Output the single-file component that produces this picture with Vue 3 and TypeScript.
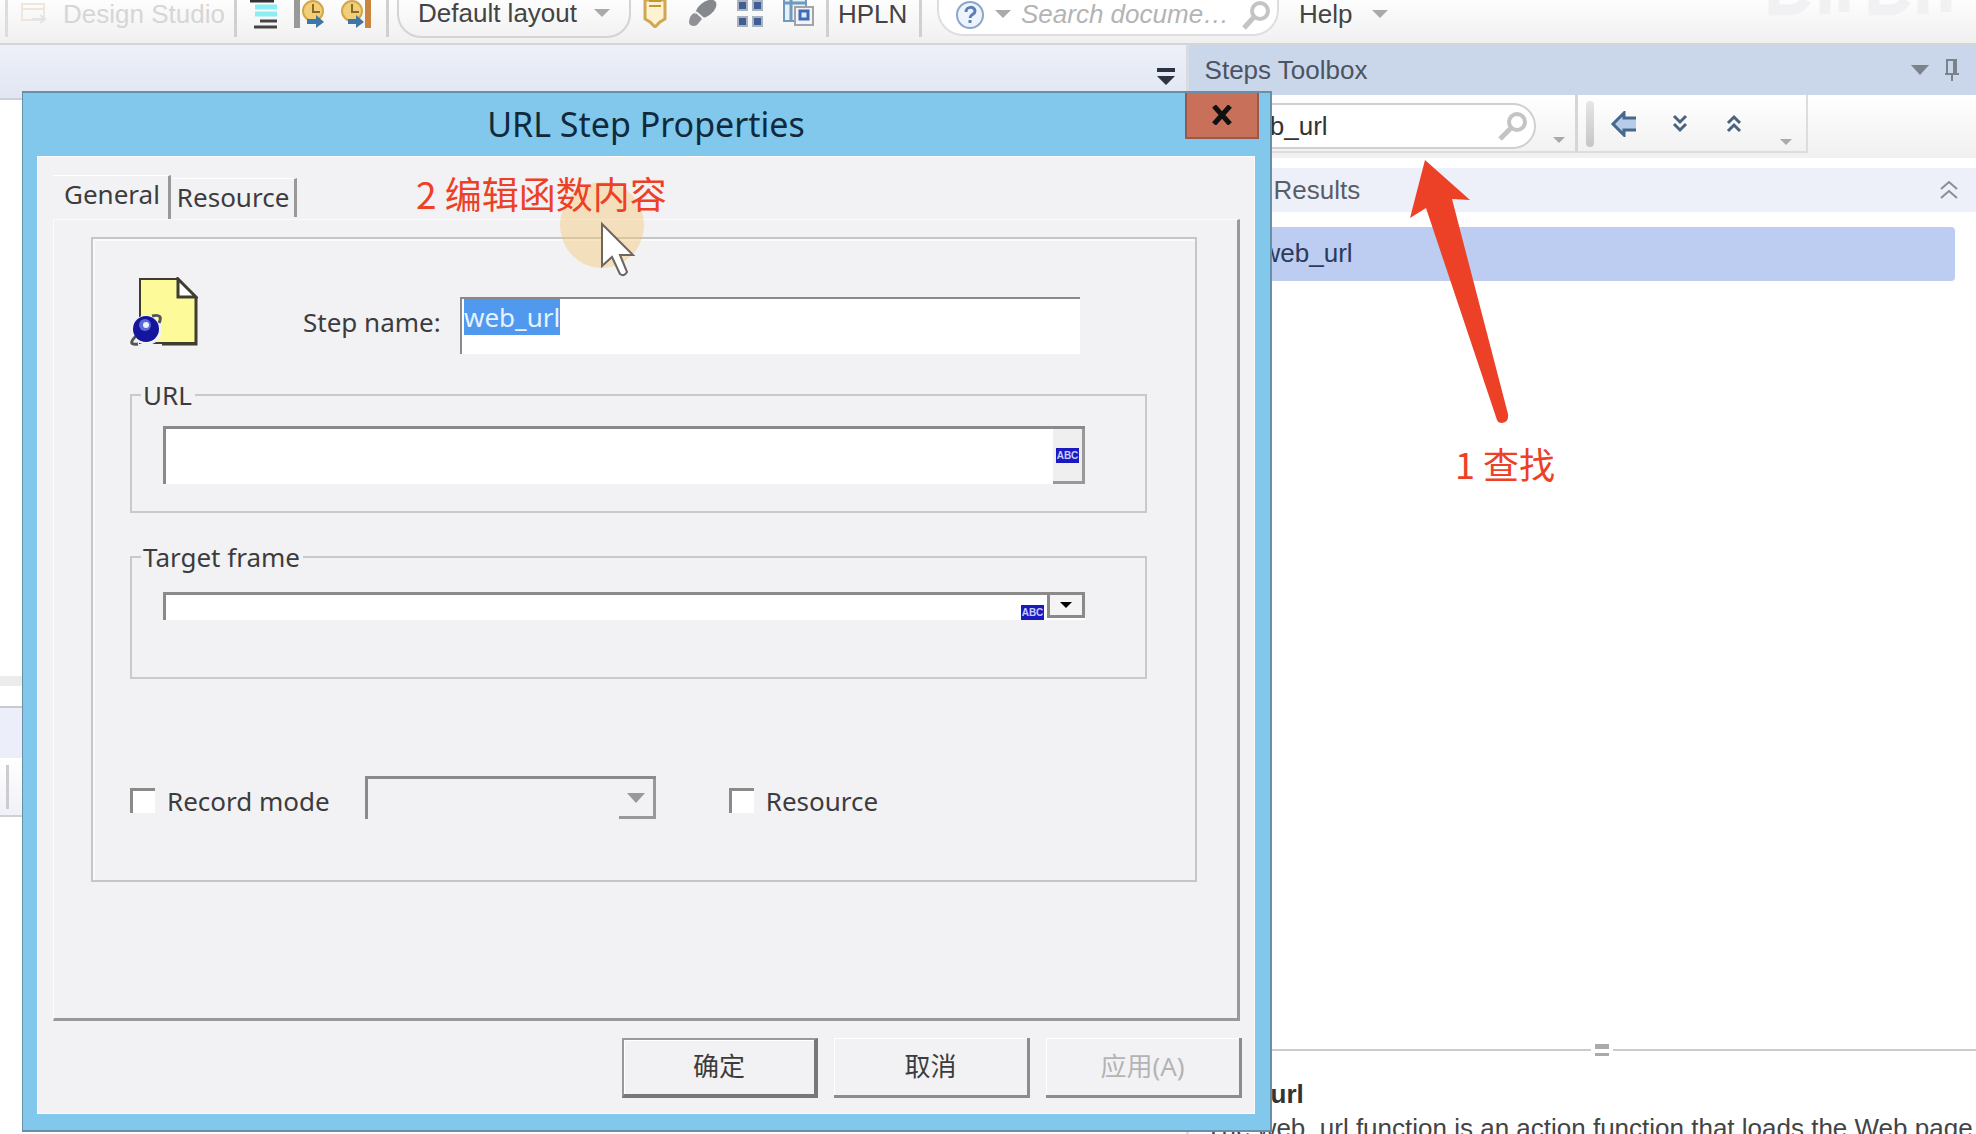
<script setup lang="ts">
import { onMounted, ref } from 'vue'

const stepName = ref('web_url')
const url = ref('')
const targetFrame = ref('')
const recordMode = ref(false)
const isResource = ref(false)
const search = ref('web_url')
const activeTab = ref('General')
const stepInput = ref<HTMLInputElement | null>(null)

onMounted(() => {
  stepInput.value?.focus()
  stepInput.value?.select()
})
</script>

<template>
  <div class="app">
    <header class="toolbar">
      <button class="tool design" disabled>
        <svg width="28" height="28" viewBox="0 0 28 28" fill="none" stroke-width="2">
          <rect x="2" y="4" width="22" height="16" stroke="#efe6dd" />
          <path d="M2 9h22" stroke="#efe6dd" />
          <path d="M12 19h12M20 15l5 4-5 4" stroke="#e0e4e6" />
        </svg>
        <span>Design Studio</span>
      </button>
      <i class="sep"></i>
      <div class="icons first">
        <button class="icon" aria-label="Outline">
          <svg width="28" height="30" viewBox="0 0 28 30">
            <path d="M0 1h24" stroke="#333" stroke-width="3" />
            <path d="M5 7h22M5 14h22" stroke="#8ceef5" stroke-width="5" />
            <path d="M10 21h17M4 27h23" stroke="#444" stroke-width="3" />
          </svg>
        </button>
        <button class="icon" aria-label="Run from start">
          <svg width="32" height="30" viewBox="0 0 32 30">
            <rect x="1" y="0" width="6" height="28" fill="#999" />
            <circle cx="20" cy="11" r="10" fill="#f1cf7a" stroke="#d3a648" stroke-width="2" />
            <path d="M20 4v8h7" fill="none" stroke="#8c6a25" stroke-width="2" />
            <path d="M14 19h9v-4l8 7-8 6v-4h-9z" fill="#3f76a8" />
          </svg>
        </button>
        <button class="icon" aria-label="Run to end">
          <svg width="32" height="30" viewBox="0 0 32 30">
            <rect x="25" y="0" width="6" height="28" fill="#c98440" />
            <circle cx="12" cy="11" r="10" fill="#f1cf7a" stroke="#d3a648" stroke-width="2" />
            <path d="M12 4v8h7" fill="none" stroke="#8c6a25" stroke-width="2" />
            <path d="M8 19h8v-4l8 7-8 6v-4H8z" fill="#3f76a8" />
          </svg>
        </button>
      </div>
      <i class="sep"></i>
      <button class="layout-pill">
        <span>Default layout</span>
        <i class="tri"></i>
      </button>
      <div class="icons second">
        <button class="icon" aria-label="Bookmark">
          <svg width="26" height="28" viewBox="0 0 26 28">
            <path d="M3 0h20v19l-5 3-5 5-5-5-5-3z" fill="#fdf3d3" stroke="#d2a652" stroke-width="3" />
            <path d="M7 1h12M7 6h12" stroke="#c9952f" stroke-width="2" />
          </svg>
        </button>
        <button class="icon" aria-label="Brush">
          <svg width="32" height="28" viewBox="0 0 32 28">
            <ellipse cx="20" cy="9" rx="12" ry="7" transform="rotate(-38 20 9)" fill="#85888c" />
            <path d="M8 13l8 6-5 6c-3 2-7 1-8-2 0-3 1-8 5-10z" fill="#8f9194" />
            <path d="M10 12l8 7" stroke="#f4f4f4" stroke-width="2" />
          </svg>
        </button>
        <button class="icon" aria-label="Tiles">
          <svg width="28" height="28" viewBox="0 0 28 28" fill="#3f5f92" stroke="#a9b2c0" stroke-width="2">
            <path d="M2 1h9v9H2zM17 1h9v9h-9zM2 17h9v9H2zM17 17h9v9h-9z" />
          </svg>
        </button>
        <button class="icon" aria-label="Windows">
          <svg width="34" height="28" viewBox="0 0 34 28">
            <rect x="2" y="-2" width="22" height="23" fill="#e6f0f8" stroke="#6f99bd" stroke-width="2" />
            <path d="M2 3h22M9 0v21" stroke="#6f99bd" stroke-width="3" />
            <rect x="13" y="7" width="18" height="18" fill="#f3f3f3" stroke="#a0a4a8" stroke-width="2" />
            <rect x="18" y="11" width="8" height="8" fill="#dce9fb" stroke="#3f6bb5" stroke-width="3" />
          </svg>
        </button>
      </div>
      <i class="sep"></i>
      <button class="tool hpln">HPLN</button>
      <i class="sep"></i>
      <label class="doc-search">
        <svg width="30" height="30" viewBox="0 0 30 30">
          <circle cx="15" cy="15" r="13" fill="#eef4fc" stroke="#8aa6cc" stroke-width="2" />
          <path d="M11 12c0-6 9-6 9-1 0 4-5 3-5 7M15 20v3" fill="none" stroke="#5b7fb4" stroke-width="3" />
        </svg>
        <i class="tri"></i>
        <input type="text" placeholder="Search docume…" aria-label="Search documentation" />
        <svg width="30" height="30" viewBox="0 0 30 30" fill="none" stroke="#c4c4c4">
          <circle cx="19" cy="11" r="8" stroke-width="4" />
          <path d="M13 17L3 28" stroke-width="5" />
        </svg>
      </label>
      <button class="tool help"><span>Help</span><i class="tri"></i></button>
      <svg class="brand" width="192" height="20" viewBox="0 0 192 20" fill="none" stroke="#f1f1f3" stroke-width="11">
        <path d="M6 0v10h14q12 0 18-10M57 0v14M76 0v12M106 0v10h14q12 0 18-10M155 0v14M178 0v12" />
      </svg>
    </header>

    <main class="workspace">
      <section class="editor">
        <div class="editor-bar">
          <button class="icon" aria-label="Open documents">
            <svg width="18" height="18" viewBox="0 0 18 18" fill="#2c3444">
              <path d="M0 0h18v4H0zM0 8h18l-9 9z" />
            </svg>
          </button>
        </div>
        <div class="editor-page"></div>
        <div class="output-edge"></div>
        <div class="output-bar"></div>
        <div class="output-tools"><i></i></div>
        <div class="output-page"></div>
      </section>

      <aside class="toolbox">
        <div class="toolbox-head">
          <h2>Steps Toolbox</h2>
          <button class="icon" aria-label="Panel menu">
            <svg width="18" height="10" viewBox="0 0 18 10" fill="#7b828c"><path d="M0 0h18l-9 10z" /></svg>
          </button>
          <button class="icon" aria-label="Pin panel">
            <svg width="16" height="24" viewBox="0 0 16 24" fill="none" stroke="#7b828c" stroke-width="2">
              <path d="M3 16V2h9v14M10 2v14M1 16h14M8 16v7" />
            </svg>
          </button>
        </div>
        <div class="toolbox-tools">
          <div class="search-box">
            <label class="step-search">
              <input v-model="search" type="text" aria-label="Search steps" />
              <svg width="30" height="30" viewBox="0 0 30 30" fill="none" stroke="#c4c4c4">
                <circle cx="19" cy="11" r="8" stroke-width="4" />
                <path d="M13 17L2 28" stroke-width="5" />
              </svg>
            </label>
            <i class="tri small"></i>
          </div>
          <div class="nav-box">
            <i class="grip"></i>
            <button class="icon" aria-label="Back">
              <svg width="28" height="26" viewBox="0 0 28 26">
                <path d="M13 2L3 13l10 11v-6h13V8H13z" fill="#b7cce8" />
                <path d="M26 7H14V2L3 13l11 11v-5h12" fill="none" stroke="#46688f" stroke-width="3" />
              </svg>
            </button>
            <button class="icon" aria-label="Expand all">
              <svg width="16" height="20" viewBox="0 0 16 20" fill="none" stroke="#4a6480" stroke-width="3">
                <path d="M2 2l6 6 6-6M2 10l6 6 6-6" />
              </svg>
            </button>
            <button class="icon" aria-label="Collapse all">
              <svg width="16" height="20" viewBox="0 0 16 20" fill="none" stroke="#4a6480" stroke-width="3">
                <path d="M2 9l6-6 6 6M2 17l6-6 6 6" />
              </svg>
            </button>
            <i class="tri small"></i>
          </div>
        </div>
        <div class="results-head">
          <h3>Results</h3>
          <button class="icon" aria-label="Collapse results">
            <svg width="18" height="20" viewBox="0 0 18 20" fill="none" stroke="#888c94" stroke-width="2">
              <path d="M1 9l8-7 8 7M1 18l8-7 8 7" />
            </svg>
          </button>
        </div>
        <a class="result" href="#">web_url</a>
        <div class="toolbox-space"></div>
        <div class="splitter"><i></i></div>
        <div class="description">
          <strong>web_url</strong>
          <p>The web_url function is an action function that loads the Web page</p>
        </div>
      </aside>
    </main>

    <form class="dialog" role="dialog" aria-labelledby="dialog-title" @submit.prevent>
      <header class="titlebar">
        <h1 id="dialog-title">URL Step Properties</h1>
        <button type="button" class="close" aria-label="Close">
          <svg width="22" height="20" viewBox="0 0 22 20" stroke="#111" stroke-width="5">
            <path d="M3 1l16 18M19 1L3 19" />
          </svg>
        </button>
      </header>
      <div class="dialog-body">
        <nav class="tabs">
          <button type="button" class="tab current" @click="activeTab = 'General'">General</button>
          <button type="button" class="tab" @click="activeTab = 'Resource'">Resource</button>
        </nav>
        <div class="panel">
          <div class="frame">
            <div class="name-row">
              <svg width="68" height="70" viewBox="0 0 68 70">
                <path d="M10 2h38l18 18v46H10z" fill="#fdfa9a" stroke="#3d3d30" stroke-width="2" />
                <path d="M48 2v18h18z" fill="#fff" stroke="#3d3d30" stroke-width="3" />
                <path d="M66 20v47H32" fill="none" stroke="#3d3d30" stroke-width="3" />
                <circle cx="17" cy="53" r="15" fill="#f2f2f3" />
                <path d="M22 39c8-2 10 1 7 7M6 59c-6 6-6 9 2 8" fill="none" stroke="#555" stroke-width="3" />
                <circle cx="16" cy="52" r="13" fill="#14149c" />
                <circle cx="15" cy="48" r="6" fill="#5b6ad8" />
                <circle cx="16" cy="48" r="3" fill="#eef1ff" />
              </svg>
              <label for="step-name">Step name:</label>
              <input id="step-name" ref="stepInput" v-model="stepName" class="step-input" type="text" />
            </div>

            <fieldset class="url-set">
              <legend>URL</legend>
              <div class="url-field">
                <input v-model="url" type="text" aria-label="URL" />
                <button type="button" class="abc-button" aria-label="Insert parameter"><span class="abc">ABC</span></button>
              </div>
            </fieldset>

            <fieldset class="target-set">
              <legend>Target frame</legend>
              <div class="target-field">
                <input v-model="targetFrame" type="text" aria-label="Target frame" />
                <button type="button" class="abc-flat" aria-label="Insert parameter"><span class="abc">ABC</span></button>
                <button type="button" class="drop" aria-label="Show frames">
                  <svg width="12" height="6" viewBox="0 0 12 6"><path d="M0 0h12L6 6z" /></svg>
                </button>
              </div>
            </fieldset>

            <div class="mode-row">
              <label class="check"><input v-model="recordMode" type="checkbox" />Record mode</label>
              <div class="combo">
                <select disabled aria-label="Record mode value"><option></option></select>
                <span class="combo-arrow">
                  <svg width="18" height="10" viewBox="0 0 18 10" fill="#999"><path d="M0 0h18l-9 10z" /></svg>
                </span>
              </div>
              <label class="check"><input v-model="isResource" type="checkbox" />Resource</label>
            </div>
          </div>
        </div>
        <footer class="actions">
          <button type="submit" class="primary">确定</button>
          <button type="button">取消</button>
          <button type="button" disabled>应用(A)</button>
        </footer>
      </div>
    </form>

    <i class="spot"></i>
    <svg class="cursor" width="36" height="58" viewBox="0 0 36 58">
      <path d="M2 3v42l10-9 8 17q4 3 7-2l-7-17h13z" fill="#fff" stroke="#6d6560" stroke-width="2" />
    </svg>
    <p class="note edit">2 编辑函数内容</p>
    <svg class="arrow" width="104" height="266" viewBox="0 0 104 266" fill="#ec4127">
      <path d="M17 1l45 40-18-1 56 215q1 8-6 9-4 0-5-3L18 49 2 59z" />
    </svg>
    <p class="note find">1 查找</p>
  </div>
</template>

<style>
html,
body {
  margin: 0;
  overflow: hidden;
}
</style>

<style scoped>
* {
  box-sizing: border-box;
}
.app {
  position: relative;
  display: flex;
  flex-direction: column;
  height: 100vh;
  overflow: hidden;
  background: #fff;
  color: #444;
  font-family: "Liberation Sans", "Noto Sans CJK SC", sans-serif;
  font-size: 26px;
  line-height: 30px;
}
button,
input,
select {
  font: inherit;
  color: inherit;
  border: 0;
  padding: 0;
  margin: 0;
  background: none;
  border-radius: 0;
  outline: none;
}
h1,
h2,
h3,
p {
  margin: 0;
  font-size: inherit;
  font-weight: normal;
}
svg {
  display: block;
  flex: none;
}
.icon {
  flex: none;
}
.tri {
  flex: none;
  border: 8px solid transparent;
  border-top-color: #aaa;
  border-bottom: 0;
}
.tri.small {
  border-width: 6px;
  border-bottom: 0;
  align-self: flex-end;
  margin-bottom: 6px;
}

/* Main toolbar */
.toolbar {
  display: flex;
  align-items: flex-start;
  flex: none;
  height: 45px;
  border-bottom: 2px solid #d3d5d8;
  background: linear-gradient(#fdfdfd, #f0f0f0);
  white-space: nowrap;
}
.toolbar::before {
  content: "";
  width: 3px;
  height: 37px;
  margin: 0 12px 0 5px;
  background: #ddd;
}
.tool {
  display: flex;
  align-items: center;
  height: 28px;
}
.design {
  gap: 15px;
  width: 214px;
  color: #d6d6d6;
}
.sep {
  flex: none;
  width: 3px;
  height: 37px;
  background: #d0d0d0;
}
.icons {
  display: flex;
}
.icons.first {
  gap: 15px;
  width: 149px;
  padding-left: 13px;
}
.icons.second {
  gap: 18px;
  width: 195px;
  padding-left: 11px;
}
.layout-pill {
  display: flex;
  align-items: center;
  gap: 17px;
  width: 234px;
  height: 38px;
  margin: 0 0 0 8px;
  padding: 0 0 10px 19px;
  border: 2px solid #d4d4d4;
  border-top: 0;
  border-radius: 0 0 24px 24px;
}
.hpln {
  width: 90px;
  padding-left: 9px;
}
.doc-search {
  display: flex;
  align-items: flex-start;
  gap: 10px;
  width: 342px;
  height: 36px;
  margin-left: 15px;
  padding: 0 6px 0 16px;
  border: 2px solid #dedede;
  border-top: 0;
  border-radius: 0 0 26px 26px;
  background: #fff;
}
.doc-search .tri {
  margin-top: 10px;
}
.doc-search input {
  flex: 1;
  min-width: 0;
  height: 28px;
  font-style: italic;
}
.doc-search input::placeholder {
  color: #b4b4b4;
}
.help {
  gap: 20px;
  margin-left: 20px;
}
.brand {
  margin: 0 16px 0 auto;
}

/* Workspace */
.workspace {
  display: flex;
  flex: 1;
  min-height: 0;
}
.editor {
  display: flex;
  flex-direction: column;
  flex: 0 0 60%;
  box-sizing: content-box;
  border-right: 3px solid #d8dbe2;
}
.editor-bar {
  display: flex;
  justify-content: flex-end;
  flex: none;
  height: 55px;
  padding: 23px 11px 0 0;
  border-bottom: 2px solid #cdd0d6;
  background: linear-gradient(#edf0f8, #e1e6f3);
}
.editor-bar .icon {
  height: 18px;
}
.editor-page {
  flex: 1;
}
.output-edge {
  height: 10px;
  background: #ececec;
}
.output-bar {
  height: 52px;
  margin-top: 20px;
  border-top: 2px solid #c8cad0;
  background: #eceffa;
}
.output-tools {
  height: 59px;
  padding: 7px 0 0 6px;
  border-bottom: 2px solid #d0d0d4;
  background: linear-gradient(#fff, #f0f1f8);
}
.output-tools i {
  display: block;
  width: 3px;
  height: 44px;
  background: #ccc;
}
.output-page {
  height: 317px;
}

.toolbox {
  display: flex;
  flex-direction: column;
  flex: 1;
  min-width: 0;
}
.toolbox-head {
  display: flex;
  align-items: center;
  gap: 15px;
  flex: none;
  height: 50px;
  padding: 0 16px 0 16px;
  background: #cad7ea;
}
.toolbox-head h2 {
  flex: 1;
  color: #4c5361;
}
.toolbox-tools {
  display: flex;
  flex: none;
  height: 63px;
  padding-bottom: 5px;
  background: linear-gradient(#fff, #f0f0f0);
}
.search-box {
  display: flex;
  align-items: flex-end;
  justify-content: space-between;
  width: 389px;
  padding: 0 10px 2px 18px;
  border-right: 3px solid #d6d6d6;
  border-bottom: 2px solid #ddd;
}
.step-search {
  display: flex;
  align-items: center;
  width: 329px;
  height: 46px;
  padding: 0 6px 0 28px;
  border: 2px solid #d0d0d0;
  border-radius: 23px;
  background: #fff;
  color: #333;
}
.step-search input {
  flex: 1;
  min-width: 0;
}
.nav-box {
  display: flex;
  align-items: center;
  width: 230px;
  padding: 2px 8px 0 8px;
  border-right: 2px solid #ddd;
  border-bottom: 2px solid #ddd;
}
.grip {
  width: 8px;
  height: 46px;
  margin-right: 16px;
  border-radius: 4px;
  background: linear-gradient(#e6e6e6, #c6c6c6);
}
.nav-box .icon {
  margin-right: 38px;
}
.nav-box .icon:first-of-type {
  margin-right: 34px;
}
.results-head {
  display: flex;
  align-items: center;
  justify-content: space-between;
  flex: none;
  height: 44px;
  margin-top: 10px;
  padding: 0 18px 0 85px;
  background: #edf0f9;
  color: #5a5d66;
}
.result {
  flex: none;
  height: 54px;
  margin: 15px 21px 0 0;
  padding-left: 73px;
  border-radius: 4px;
  background: #bccdf1;
  color: #2c3a5c;
  line-height: 52px;
  text-decoration: none;
}
.toolbox-space {
  flex: 1;
}
.splitter {
  display: flex;
  align-items: center;
  gap: 4px;
  height: 14px;
}
.splitter::before,
.splitter::after {
  content: "";
  flex: 52 0 0;
  height: 2px;
  background: #ccc;
}
.splitter::after {
  flex-grow: 47;
}
.splitter i {
  width: 14px;
  height: 12px;
  border: solid #aaa;
  border-width: 5px 0 3px;
}
.description {
  height: 77px;
  padding: 21px 0 0 17px;
  line-height: 36px;
  white-space: nowrap;
  overflow: hidden;
}
.description strong {
  display: block;
  line-height: 32px;
  color: #333;
}

/* Dialog */
.dialog {
  position: absolute;
  left: 22px;
  top: 91px;
  width: 1250px;
  padding: 0 15px 16px 14px;
  border: 2px solid #6790a6;
  border-width: 2px 2px 2px 1px;
  background: #81c8ec;
  font-family: "Noto Sans", "Noto Sans CJK SC", sans-serif;
  line-height: 36px;
  color: #3c3c3e;
}
.titlebar {
  display: grid;
  grid-template-columns: 1fr auto 1fr;
  height: 63px;
}
.titlebar h1 {
  grid-column: 2;
  color: #102a3c;
  font-size: 34px;
  line-height: 62px;
}
.close {
  display: flex;
  align-items: center;
  justify-content: center;
  justify-self: end;
  width: 74px;
  height: 46px;
  margin-right: -4px;
  border: 2px solid #97594c;
  border-top: 0;
  background: #c9705a;
}
.dialog-body {
  padding: 17px 12px 15px 15px;
  border: 1px solid #fbfbfb;
  background: #f2f2f4;
}
.tabs {
  display: flex;
  align-items: flex-end;
  height: 45px;
}
.tab {
  height: 39px;
  padding: 0 5px 2px 4px;
  margin: 0 0 2px 2px;
  border-top: 1px solid #fff;
  border-right: 3px solid #999;
  line-height: 36px;
}
.tab.current {
  height: 44px;
  margin: 0;
  padding: 0 8px 8px 11px;
}
.panel {
  margin-right: 2px;
  padding: 17px 40px 136px 37px;
  border: 1px solid #fbfbfb;
  border-right: 3px solid #999;
  border-bottom: 3px solid #999;
}
.frame {
  height: 645px;
  padding: 38px 48px 0 37px;
  border: 2px solid #c6c6c6;
  box-shadow: inset 2px 2px 0 #fafafa;
}
.name-row {
  display: grid;
  grid-template-columns: 173px 157px 620px;
  align-items: start;
  height: 78px;
}
.name-row label {
  padding-top: 27px;
}
.step-input {
  height: 57px;
  margin-top: 20px;
  padding: 0 0 19px 2px;
  border: solid #8a8a8a;
  border-width: 2px 0 0 2px;
  background: #fff;
}
.step-input::selection {
  background: #5199ee;
  color: #e4f3ff;
}
fieldset {
  min-width: 0;
  margin: 0;
  padding: 0 60px 0 31px;
  border: 2px solid #c9c9c9;
}
legend {
  margin-left: -22px;
  padding: 0 3px 0 2px;
}
.url-set {
  height: 136px;
  margin-top: 22px;
}
.target-set {
  height: 140px;
  margin-top: 26px;
}
.url-field {
  display: flex;
  height: 58px;
  margin-top: 13px;
  border: solid #8a8a8a;
  border-width: 3px 0 0 3px;
  background: #fff;
}
.url-field input,
.target-field input {
  flex: 1;
  min-width: 0;
}
.abc-button {
  display: flex;
  align-items: center;
  justify-content: center;
  width: 32px;
  border: solid #999;
  border-width: 0 3px 3px 0;
  background: #f0eff0;
}
.abc {
  display: block;
  width: 23px;
  height: 15px;
  background: #1a1ac0;
  color: #c8ccff;
  font: bold 10px/15px "Liberation Sans", sans-serif;
  text-align: center;
}
.target-field {
  display: flex;
  height: 28px;
  margin-top: 17px;
  border: solid #8a8a8a;
  border-width: 3px 0 0 3px;
  background: #fff;
}
.abc-flat {
  display: flex;
  align-items: flex-end;
  width: 26px;
}
.drop {
  display: flex;
  align-items: center;
  justify-content: center;
  width: 38px;
  height: 23px;
  border: solid #8a8a8a;
  border-width: 0 3px 3px 3px;
  background: #f4f4f4;
}
.mode-row {
  display: flex;
  align-items: center;
  margin-top: 97px;
}
.check {
  display: flex;
  align-items: center;
  gap: 12px;
  padding-top: 6px;
}
.check input {
  appearance: none;
  width: 25px;
  height: 25px;
  border: solid #8a8a8a;
  border-width: 3px 0 0 3px;
  background: #fff;
}
.combo {
  position: relative;
  width: 291px;
  height: 43px;
  margin: 0 73px 0 35px;
}
.combo select {
  appearance: none;
  width: 100%;
  height: 100%;
  border: solid #8a8a8a;
  border-width: 3px 3px 0 3px;
  opacity: 1;
}
.combo-arrow {
  position: absolute;
  right: 0;
  bottom: 0;
  display: flex;
  align-items: center;
  justify-content: center;
  width: 37px;
  height: 40px;
  border: solid #999;
  border-width: 0 3px 3px 0;
  pointer-events: none;
}
.actions {
  display: flex;
  justify-content: flex-end;
  gap: 16px;
  margin-top: 17px;
}
.actions button {
  width: 196px;
  height: 60px;
  padding-bottom: 2px;
  border: solid #8c8c8c;
  border-width: 0 3px 3px 0;
  box-shadow: inset 1px 1px 0 #fff;
}
.actions .primary {
  border: 2px solid #999;
  border-right: 4px solid #777;
  border-bottom: 4px solid #777;
}
.actions button:disabled {
  color: #b4b4b4;
}

/* Annotations floating over the windows */
.spot {
  position: absolute;
  left: 560px;
  top: 182px;
  width: 84px;
  height: 86px;
  border-radius: 50%;
  background: #f6c266;
  opacity: 0.4;
}
.cursor {
  position: absolute;
  left: 600px;
  top: 221px;
}
.note {
  position: absolute;
  color: #ee4026;
  font-family: "Noto Sans CJK SC", sans-serif;
  font-size: 36px;
  line-height: 44px;
  white-space: nowrap;
}
.edit {
  left: 416px;
  top: 171px;
  font-size: 37px;
}
.find {
  left: 1455px;
  top: 441px;
}
.arrow {
  position: absolute;
  left: 1408px;
  top: 159px;
}
</style>
